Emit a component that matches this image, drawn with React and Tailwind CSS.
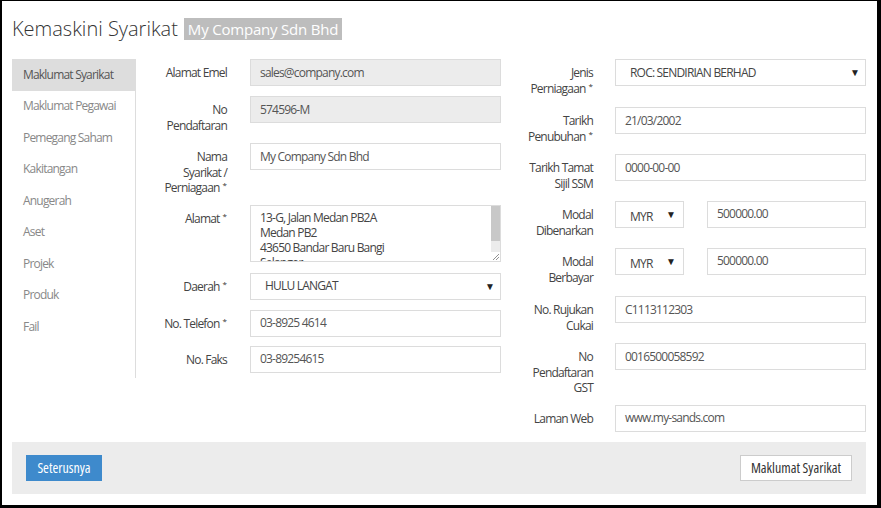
import React from "react";

const font = { fontFamily: '"Open Sans", "Noto Sans", sans-serif' };

function Req() {
  return <sup className="text-[8px] ml-[3px] text-[#333] tracking-normal">*</sup>;
}

function Label({ children }) {
  return (
    <div className="shrink-0 text-right pt-[6px] leading-[15.5px] text-[12px] text-[#444]">
      {children}
    </div>
  );
}

function Input({ value, disabled, className = "" }) {
  return (
    <div
      className={
        "h-[27px] border border-[#dcdcdc] px-[9px] flex items-center text-[12px] text-[#555] " +
        (disabled ? "bg-[#ececec] " : "bg-white ") +
        className
      }
    >
      {value}
    </div>
  );
}

function Select({ value, className = "", textClass = "" }) {
  return (
    <div
      className={
        "h-[27px] border border-[#dcdcdc] bg-white pl-[14px] pr-[6px] flex items-center justify-between text-[12px] text-[#444] " +
        className
      }
    >
      <span className={textClass}>{value}</span>
      <span className="text-[10px] text-[#222]">▼</span>
    </div>
  );
}

function Row({ label, labelW, gap, children, mb = "mb-[10px]" }) {
  return (
    <div className={"flex " + mb}>
      <div className={labelW}>
        <Label>{label}</Label>
      </div>
      <div className={"flex-1 " + gap}>{children}</div>
    </div>
  );
}

const sideItems = [
  "Maklumat Syarikat",
  "Maklumat Pegawai",
  "Pemegang Saham",
  "Kakitangan",
  "Anugerah",
  "Aset",
  "Projek",
  "Produk",
  "Fail",
];

export default function App() {
  const L = "w-[91px]";
  const LG = "ml-[23px]";
  const R = "w-[92px]";
  const RG = "ml-[22px]";
  return (
    <div
      style={font}
      className="w-[881px] h-[508px] bg-white border-black border-l-2 border-t border-r-[4px] border-b-[3px] pl-[10px] pr-[11px] pt-[17px] overflow-hidden tracking-[-0.8px]"
    >
      {/* Title */}
      <div className="flex items-center h-[22px] mb-[19px] tracking-normal">
        <span className="text-[20px] font-light text-[#333] leading-none">
          Kemaskini Syarikat
        </span>
        <span className="ml-[6px] h-[22px] px-[4px] bg-[#bdbdbd] text-white text-[15px] tracking-[-0.2px] leading-[22px]">
          My Company Sdn Bhd
        </span>
      </div>

      {/* Body */}
      <div className="flex">
        {/* Sidebar */}
        <div className="w-[124px] h-[319px] border-r border-[#dddddd] shrink-0">
          {sideItems.map((it, i) => (
            <div
              key={it}
              className={
                "h-[31.5px] flex items-center pl-[11px] text-[12px] " +
                (i === 0 ? "bg-[#dddddd] text-[#555]" : "text-[#888]")
              }
            >
              {it}
            </div>
          ))}
        </div>

        {/* Form */}
        <div className="flex flex-1">
          {/* Left column */}
          <div className="w-[365px]">
            <Row label="Alamat Emel" labelW={L} gap={LG}>
              <Input value="sales@company.com" disabled />
            </Row>
            <Row
              label={
                <>
                  No
                  <br />
                  Pendaftaran
                </>
              }
              labelW={L}
              gap={LG}
            >
              <Input value="574596-M" disabled />
            </Row>
            <Row
              label={
                <>
                  Nama
                  <br />
                  Syarikat /
                  <br />
                  Perniagaan
                  <Req />
                </>
              }
              labelW={L}
              gap={LG}
              mb="mb-[9px]"
            >
              <Input value="My Company Sdn Bhd" />
            </Row>
            <Row
              label={
                <>
                  Alamat
                  <Req />
                </>
              }
              labelW={L}
              gap={LG}
              mb="mb-[11px]"
            >
              <div className="relative h-[57px] border border-[#dcdcdc] bg-white overflow-hidden">
                <div className="px-[9px] pt-[4px] text-[12px] leading-[15px] text-[#444]">
                  13-G, Jalan Medan PB2A
                  <br />
                  Medan PB2
                  <br />
                  43650 Bandar Baru Bangi
                  <br />
                  Selangor
                </div>
                <div className="absolute right-0 top-0 w-[9px] h-full flex flex-col bg-[#f1f1f1]">
                  <div className="h-[35px] bg-[#c8c8c8]" />
                  <div className="flex-1 bg-[#ececec]" />
                  <div className="h-[9px] bg-white">
                    <svg width="9" height="9" viewBox="0 0 9 9">
                      <line x1="2" y1="8" x2="8" y2="2" stroke="#777" strokeWidth="0.8" />
                      <line x1="5" y1="8" x2="8" y2="5" stroke="#777" strokeWidth="0.8" />
                    </svg>
                  </div>
                </div>
              </div>
            </Row>
            <Row
              label={
                <>
                  Daerah
                  <Req />
                </>
              }
              labelW={L}
              gap={LG}
            >
              <Select value="HULU LANGAT" />
            </Row>
            <Row
              label={
                <>
                  No. Telefon
                  <Req />
                </>
              }
              labelW={L}
              gap={LG}
              mb="mb-[9px]"
            >
              <Input value="03-8925 4614" />
            </Row>
            <Row label="No. Faks" labelW={L} gap={LG}>
              <Input value="03-89254615" />
            </Row>
          </div>

          {/* Right column */}
          <div className="flex-1">
            <Row
              label={
                <>
                  Jenis
                  <br />
                  Perniagaan
                  <Req />
                </>
              }
              labelW={R}
              gap={RG}
              mb="mb-[11px]"
            >
              <Select value="ROC: SENDIRIAN BERHAD" />
            </Row>
            <Row
              label={
                <>
                  Tarikh
                  <br />
                  Penubuhan
                  <Req />
                </>
              }
              labelW={R}
              gap={RG}
            >
              <Input value="21/03/2002" />
            </Row>
            <Row
              label={
                <>
                  Tarikh Tamat
                  <br />
                  Sijil SSM
                </>
              }
              labelW={R}
              gap={RG}
            >
              <Input value="0000-00-00" />
            </Row>
            <Row
              label={
                <>
                  Modal
                  <br />
                  Dibenarkan
                </>
              }
              labelW={R}
              gap={RG}
            >
              <div className="flex gap-[23px]">
                <Select value="MYR" className="w-[69px] pr-[8px]" textClass="pt-[4px]" />
                <Input value="500000.00" className="flex-1 items-start pt-[3px]" />
              </div>
            </Row>
            <Row
              label={
                <>
                  Modal
                  <br />
                  Berbayar
                </>
              }
              labelW={R}
              gap={RG}
              mb="mb-[11px]"
            >
              <div className="flex gap-[23px]">
                <Select value="MYR" className="w-[69px] pr-[8px]" textClass="pt-[4px]" />
                <Input value="500000.00" className="flex-1 items-start pt-[3px]" />
              </div>
            </Row>
            <Row
              label={
                <>
                  No. Rujukan
                  <br />
                  Cukai
                </>
              }
              labelW={R}
              gap={RG}
            >
              <Input value="C1113112303" />
            </Row>
            <Row
              label={
                <>
                  No
                  <br />
                  Pendaftaran
                  <br />
                  GST
                </>
              }
              labelW={R}
              gap={RG}
              mb="mb-[9px]"
            >
              <Input value="0016500058592" />
            </Row>
            <Row label="Laman Web" labelW={R} gap={RG}>
              <Input value="www.my-sands.com" />
            </Row>
          </div>
        </div>
      </div>

      {/* Footer */}
      <div className="h-[52px] bg-[#ececec] px-[14px] flex items-center justify-between tracking-normal">
        <div className="w-[76px] h-[26px] bg-[#3e8acc] text-white text-[14px] font-stretch-condensed flex items-center justify-center">
          Seterusnya
        </div>
        <div className="w-[112px] h-[26px] bg-white border border-[#cccccc] text-[#333] text-[14px] font-stretch-condensed flex items-center justify-center">
          Maklumat Syarikat
        </div>
      </div>
    </div>
  );
}
